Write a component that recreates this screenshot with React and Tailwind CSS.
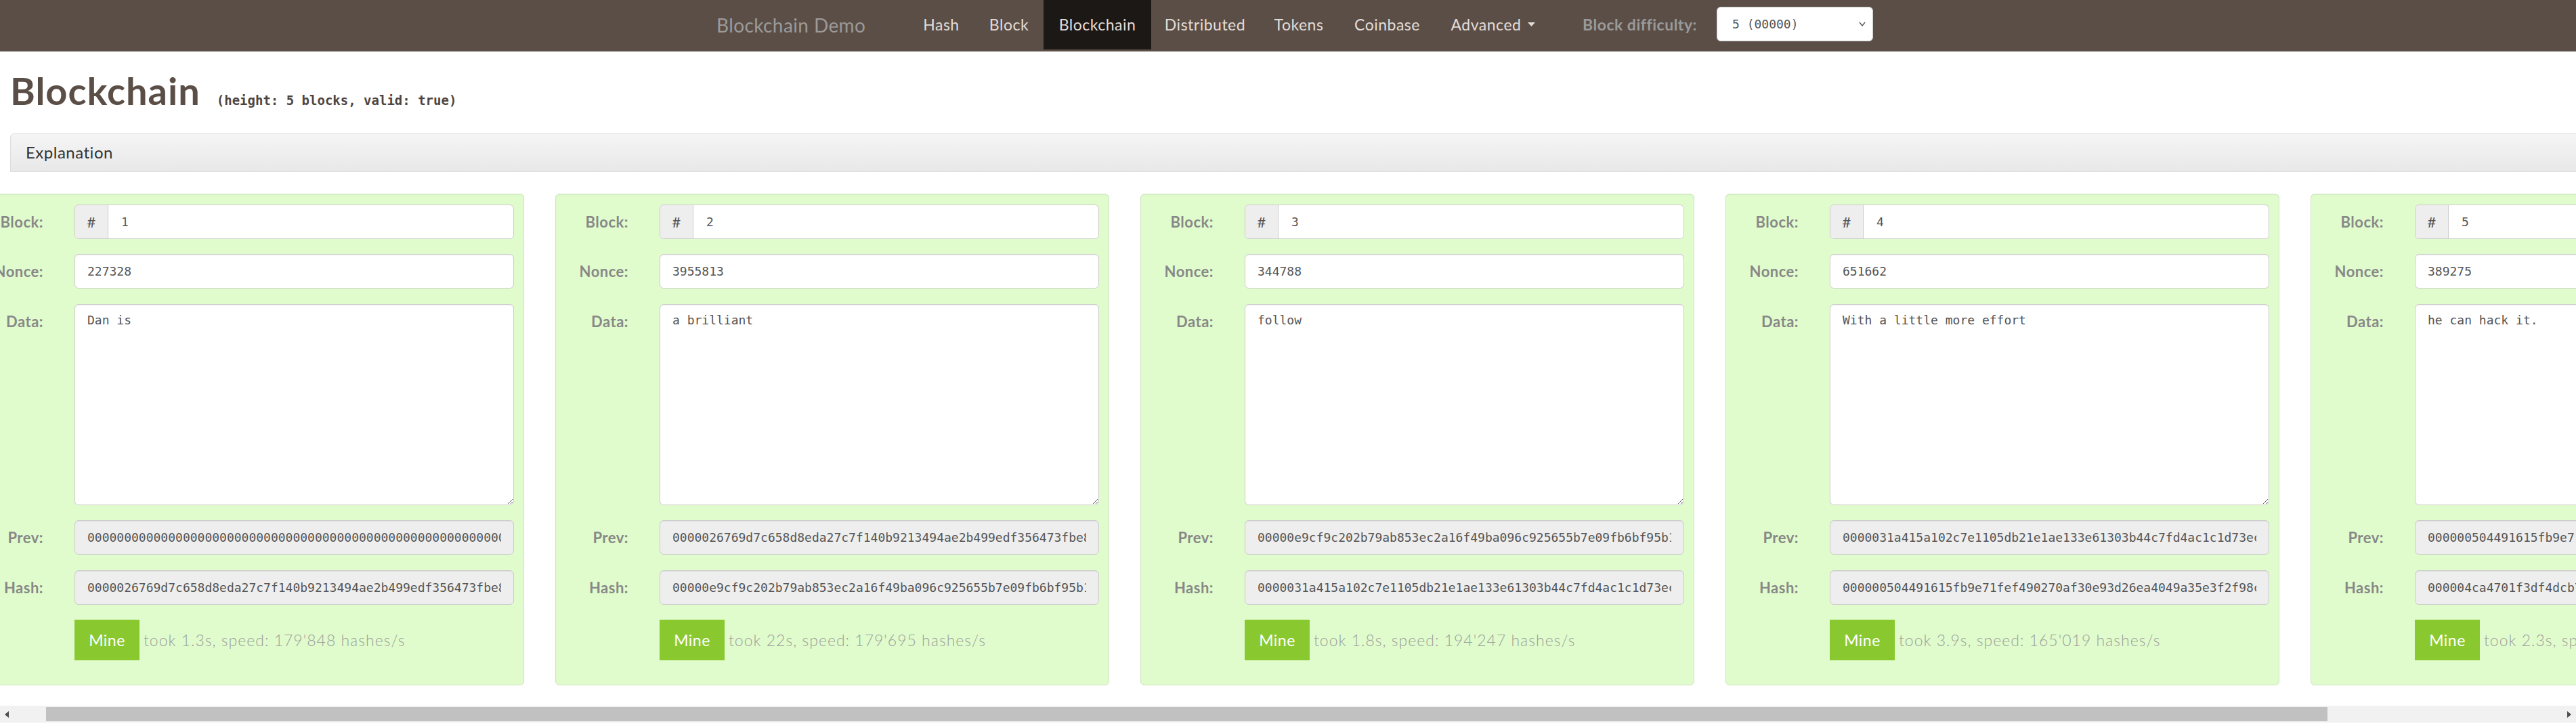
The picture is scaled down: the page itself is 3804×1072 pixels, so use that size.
const blocks = [
  {
    number: "1",
    nonce: "227328",
    data: "Dan is",
    prev: "0000000000000000000000000000000000000000000000000000000000000000",
    hash: "0000026769d7c658d8eda27c7f140b9213494ae2b499edf356473fbe8a4c2b1f",
    took: "took 1.3s, speed: 179'848 hashes/s"
  },
  {
    number: "2",
    nonce: "3955813",
    data: "a brilliant",
    prev: "0000026769d7c658d8eda27c7f140b9213494ae2b499edf356473fbe8a4c2b1f",
    hash: "00000e9cf9c202b79ab853ec2a16f49ba096c925655b7e09fb6bf95b13d8e7c0",
    took: "took 22s, speed: 179'695 hashes/s"
  },
  {
    number: "3",
    nonce: "344788",
    data: "follow",
    prev: "00000e9cf9c202b79ab853ec2a16f49ba096c925655b7e09fb6bf95b13d8e7c0",
    hash: "0000031a415a102c7e1105db21e1ae133e61303b44c7fd4ac1c1d73ec5f2a9b4",
    took: "took 1.8s, speed: 194'247 hashes/s"
  },
  {
    number: "4",
    nonce: "651662",
    data: "With a little more effort",
    prev: "0000031a415a102c7e1105db21e1ae133e61303b44c7fd4ac1c1d73ec5f2a9b4",
    hash: "000000504491615fb9e71fef490270af30e93d26ea4049a35e3f2f98c41e7d2a",
    took: "took 3.9s, speed: 165'019 hashes/s"
  },
  {
    number: "5",
    nonce: "389275",
    data: "he can hack it.",
    prev: "000000504491615fb9e71fef490270af30e93d26ea4049a35e3f2f98c41e7d2a",
    hash: "000004ca4701f3df4dcb7e2a9c0d15b86f3e42a7d91c0b5e8f26a3d4c71b09e5",
    took: "took 2.3s, speed: 168'532 hashes/s"
  }
];

const navLinks = [
  { label: "Hash", width: "w-[98px]" },
  { label: "Block", width: "w-[102px]" },
  { label: "Blockchain", width: "w-[159px]", active: true },
  { label: "Distributed", width: "w-[159px]" },
  { label: "Tokens", width: "w-[118px]" },
  { label: "Coinbase", width: "w-[143px]" }
];

const mono = "font-['DejaVu_Sans_Mono',monospace]";
const fieldBase =
  "h-[51px] w-full rounded-[6px] border border-[#cccccc] px-[18px] text-[18px] text-[#555555] shadow-[inset_0_1px_1px_rgba(0,0,0,0.075)] outline-none";

function Row({ label, children }) {
  return (
    <div className="flex items-start">
      <div className="h-[51px] w-[107px] shrink-0 text-right text-[22px] font-bold leading-[51px] tracking-[0.5px] text-[#888888]">{label}</div>
      <div className="ml-[46px] flex-1">{children}</div>
    </div>
  );
}

function BlockCard({ block }) {
  return (
    <div className="flex w-[818px] shrink-0 flex-col gap-[22.5px] rounded-[6px] border border-[#cfe3c2] bg-[#e0fccc] pb-[36px] pr-[14px] pt-[15px] shadow-[inset_0_1px_1px_rgba(0,0,0,0.05)]">
      <Row label="Block:">
        <div className="flex h-[51px] rounded-[6px] border border-[#cccccc] bg-white shadow-[inset_0_1px_1px_rgba(0,0,0,0.075)]">
          <div className="flex w-[49px] items-center justify-center rounded-l-[6px] border-r border-[#cccccc] bg-[#eeeeee] text-[22px] text-[#555555]">#</div>
          <input
            defaultValue={block.number}
            className={`${mono} h-full flex-1 rounded-r-[6px] bg-white px-[19px] text-[18px] text-[#555555] outline-none`}
          />
        </div>
      </Row>
      <Row label="Nonce:">
        <input defaultValue={block.nonce} className={`${mono} ${fieldBase} bg-white`} />
      </Row>
      <Row label="Data:">
        <textarea
          defaultValue={block.data}
          className={`${mono} block h-[297px] w-full rounded-[6px] border border-[#cccccc] bg-white px-[18px] py-[9px] text-[18px] leading-[28px] text-[#555555] shadow-[inset_0_1px_1px_rgba(0,0,0,0.075)] outline-none`}
        />
      </Row>
      <Row label="Prev:">
        <input readOnly value={block.prev} className={`${mono} ${fieldBase} bg-[#eeeeee]`} />
      </Row>
      <Row label="Hash:">
        <input readOnly value={block.hash} className={`${mono} ${fieldBase} bg-[#eeeeee]`} />
      </Row>
      <div className="flex items-center">
        <div className="w-[107px] shrink-0" />
        <div className="ml-[46px] flex items-center">
          <button className="h-[60px] w-[96px] bg-[#89c92f] text-[23px] tracking-[0.5px] text-white">Mine</button>
          <span className="ml-[6px] whitespace-nowrap text-[23px] font-light tracking-[1px] text-[#9c9c9c]">{block.took}</span>
        </div>
      </div>
    </div>
  );
}

export default function App() {
  return (
    <div className="flex h-[1072px] w-[3804px] flex-col overflow-hidden bg-white font-['Lato',sans-serif]">
      <nav className="flex h-[76px] shrink-0 items-start bg-[#5b4e46]">
        <div className="ml-[1036px] flex h-[73px] w-[262px] shrink-0 items-center whitespace-nowrap pl-[22px] text-[28px] tracking-[0.4px] text-[#9a9a9a]">
          Blockchain Demo
        </div>
        <div className="ml-[43px] flex h-[73px]">
          {navLinks.map((link) => (
            <div
              key={link.label}
              className={`${link.width} flex items-center justify-center text-[23px] tracking-[0.5px] text-[#e2ddd9] ${link.active ? "bg-[#1c1816]" : ""}`}
            >
              {link.label}
            </div>
          ))}
          <div className="flex w-[170px] items-center justify-center gap-[10px] text-[23px] tracking-[0.5px] text-[#e2ddd9]">
            <span>Advanced</span>
            <svg width="11" height="7" viewBox="0 0 11 7">
              <path d="M0 0 L11 0 L5.5 6 Z" fill="#e2ddd9" />
            </svg>
          </div>
        </div>
        <div className="ml-[47px] flex h-[73px] w-[198px] items-center whitespace-nowrap text-[23px] font-bold tracking-[0.5px] text-[#9a9a9a]">Block difficulty:</div>
        <div className="mt-[10px] flex h-[51px] w-[231px] items-center justify-between rounded-[6px] border border-[#cccccc] bg-white pl-[22px] pr-[10px]">
          <span className={`${mono} text-[18px] text-[#555555]`}>5 (00000)</span>
          <svg width="10" height="7" viewBox="0 0 10 7">
            <path d="M1 1 L5 6 L9 1" fill="none" stroke="#555555" strokeWidth="1.4" />
          </svg>
        </div>
      </nav>

      <div className="flex items-baseline pl-[15px] pt-[30px]">
        <h1 className="text-[56px] font-bold leading-none tracking-[1px] text-[#5b4e46]">Blockchain</h1>
        <span className={`${mono} ml-[24px] text-[19px] font-bold text-[#4f4540]`}>(height: 5 blocks, valid: true)</span>
      </div>

      <div className="ml-[15px] mt-[34px] flex h-[57px] w-[3820px] shrink-0 items-center rounded-t-[6px] border border-[#dddddd] bg-gradient-to-b from-[#f5f5f5] to-[#e8e8e8] pl-[22px] text-[24px] tracking-[0.5px] text-[#333333]">
        Explanation
      </div>

      <div className="mt-[32px] overflow-hidden">
        <div className="ml-[-44px] flex gap-[46px]">
          {blocks.map((block) => (
            <BlockCard key={block.number} block={block} />
          ))}
        </div>
      </div>

      <div className="mt-[30px] flex h-[25px] shrink-0 items-center bg-[#f1f1f1]">
        <div className="flex w-[20px] items-center justify-center">
          <svg width="6" height="10" viewBox="0 0 6 10">
            <path d="M6 0 L0 5 L6 10 Z" fill="#505050" />
          </svg>
        </div>
        <div className="ml-[48px] h-[21px] w-[3369px] bg-[#c1c1c1]" />
        <div className="ml-auto flex w-[20px] items-center justify-center">
          <svg width="6" height="10" viewBox="0 0 6 10">
            <path d="M0 0 L6 5 L0 10 Z" fill="#505050" />
          </svg>
        </div>
      </div>
    </div>
  );
}
